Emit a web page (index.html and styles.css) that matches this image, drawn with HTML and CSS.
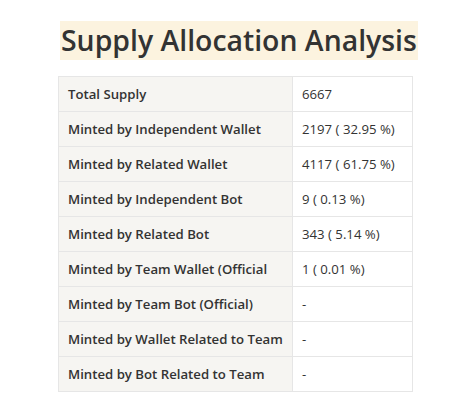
FILE: index.html
```html
<!DOCTYPE html>
<html>
<head>
<meta charset="utf-8">
<link rel="stylesheet" href="styles.css">
</head>
<body>
<div class="wrap">
  <h1 class="title"><span class="hl">Supply Allocation Analysis</span></h1>
  <table class="alloc">
    <tr><th>Total Supply</th><td>6667</td></tr>
    <tr><th>Minted by Independent Wallet</th><td>2197 ( 32.95 %)</td></tr>
    <tr><th>Minted by Related Wallet</th><td>4117 ( 61.75 %)</td></tr>
    <tr><th>Minted by Independent Bot</th><td>9 ( 0.13 %)</td></tr>
    <tr><th>Minted by Related Bot</th><td>343 ( 5.14 %)</td></tr>
    <tr><th>Minted by Team Wallet (Official</th><td>1 ( 0.01 %)</td></tr>
    <tr><th>Minted by Team Bot (Official)</th><td>-</td></tr>
    <tr><th>Minted by Wallet Related to Team</th><td>-</td></tr>
    <tr><th>Minted by Bot Related to Team</th><td>-</td></tr>
  </table>
</div>
</body>
</html>
```
FILE: styles.css
```css
html, body { margin: 0; padding: 0; background: #fff; }
body { font-family: "Open Sans", "Noto Sans", sans-serif; color: #333; }
.wrap { padding: 21px 0 0 58px; }
.title { margin: 0 0 16px 2px; font-size: 28.4px; font-weight: 600; line-height: 39px; height: 39px; }
.hl { background: #fcf3df; display: inline-block; padding: 0 1px; }
.alloc { border-collapse: collapse; width: 355px; table-layout: fixed; font-size: 13.2px; }
.alloc th, .alloc td { border: 1px solid #e6e6e6; height: 35px; padding: 0 9px; text-align: left; white-space: nowrap; box-sizing: border-box; }
.alloc th { background: #f6f5f2; font-weight: 600; width: 234px; }
.alloc td { font-weight: 400; }
```
